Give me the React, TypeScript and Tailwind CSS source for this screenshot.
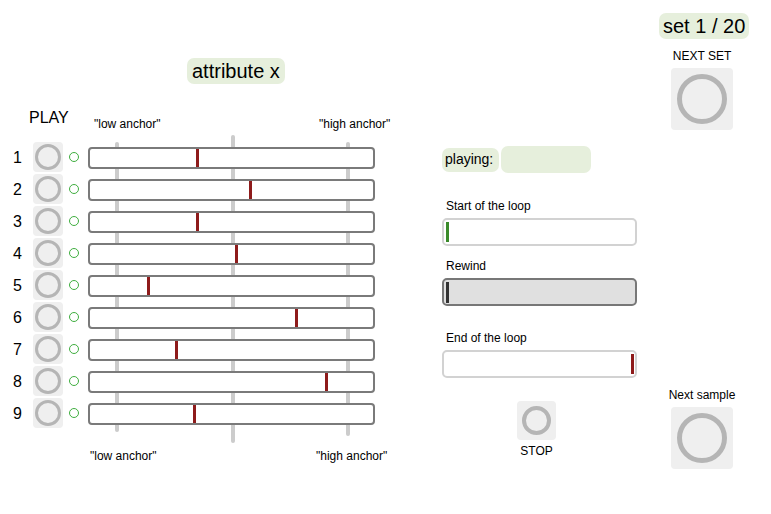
import React from "react";

// Marker x positions (page coords, centre of the red tick) for each row
const ROWS = [197, 250, 197, 236, 148, 296, 176, 326, 194];

function Pill({ children, className = "" }: { children?: React.ReactNode; className?: string }) {
  return (
    <div className={`flex items-center rounded-[7px] bg-[#e6efdc] ${className}`}>
      {children}
    </div>
  );
}

function RingButton({ size, ring, stroke }: { size: string; ring: string; stroke: string }) {
  return (
    <div className={`flex items-center justify-center rounded-[4px] bg-[#efefef] ${size}`}>
      <div className={`rounded-full border-[#b5b5b5] ${ring} ${stroke}`} />
    </div>
  );
}

function Row({ n, x }: { n: number; x: number }) {
  return (
    <div className="relative z-10 flex h-[32px] items-center">
      <span className="w-[33px] pl-[13px] pt-[1px] text-[16px] leading-[18px] text-black">{n}</span>
      <RingButton size="w-[30px] h-[30px]" ring="w-[26px] h-[26px]" stroke="border-[3px]" />
      <div className="ml-[6px] h-[10px] w-[10px] rounded-full border border-[#3fae3f]" />
      <div className="relative ml-[9px] mt-[2px] h-[22px] w-[287px] rounded-[4px] border-2 border-[#7a7a7a] bg-white">
        <div className="absolute top-0 h-full w-[3px] bg-[#8e1b1b]" style={{ left: x - 91 }} />
      </div>
    </div>
  );
}

export default function App() {
  return (
    <div className="flex h-[514px] w-[771px] overflow-hidden bg-white font-['Liberation_Sans',Arial,sans-serif] text-black">
      {/* ── Left: attribute sliders ─────────────────────────────── */}
      <div className="w-[442px] shrink-0">
        <Pill className="ml-[187px] mt-[58px] h-[26px] w-fit px-[5px] text-[20px]">attribute x</Pill>

        <div className="flex h-[57px]">
          <div className="w-[94px] pl-[29px] pt-[25px] text-[16px] leading-[18px]">PLAY</div>
          <div className="w-[225px] pt-[33px] text-[12px] leading-[14px]">"low anchor"</div>
          <div className="pt-[33px] text-[12px] leading-[14px]">"high anchor"</div>
        </div>

        <div className="relative">
          <div className="absolute left-[115px] top-[1px] h-[290px] w-[4px] rounded-full bg-[#cccccc]" />
          <div className="absolute left-[231px] top-[-6px] h-[308px] w-[4px] rounded-full bg-[#cccccc]" />
          <div className="absolute left-[346px] top-[1px] h-[294px] w-[4px] rounded-full bg-[#cccccc]" />
          {ROWS.map((x, i) => (
            <Row key={i} n={i + 1} x={x} />
          ))}
        </div>

        <div className="mt-[20px] flex text-[12px] leading-[14px]">
          <div className="w-[316px] pl-[90px]">"low anchor"</div>
          <div>"high anchor"</div>
        </div>
      </div>

      {/* ── Middle: playback controls ───────────────────────────── */}
      <div className="w-[195px] shrink-0">
        <div className="mt-[146px] flex items-center">
          <Pill className="h-[24px] w-[57px] px-[3px] text-[14px]">playing:</Pill>
          <Pill className="ml-[2px] h-[27px] w-[90px]" />
        </div>

        <div className="ml-[4px] mt-[26px] text-[12px] leading-[14px]">Start of the loop</div>
        <div className="mt-[5px] h-[28px] w-[195px] rounded-[5px] border-2 border-[#d2d2d2] bg-white pl-[2px] pt-[2px]">
          <div className="h-[20px] w-[3px] bg-[#3a8a2a]" />
        </div>

        <div className="ml-[4px] mt-[13px] text-[12px] leading-[14px]">Rewind</div>
        <div className="mt-[5px] h-[28px] w-[195px] rounded-[5px] border-2 border-[#777777] bg-[#e0e0e0] pl-[2px] pt-[2px]">
          <div className="h-[21px] w-[3px] bg-[#333333]" />
        </div>

        <div className="ml-[4px] mt-[25px] text-[12px] leading-[14px]">End of the loop</div>
        <div className="mt-[5px] flex h-[28px] w-[195px] justify-end rounded-[5px] border-2 border-[#d2d2d2] bg-white pr-[1px] pt-[2px]">
          <div className="h-[20px] w-[3px] bg-[#8e1b1b]" />
        </div>

        <div className="ml-[75px] mt-[23px] flex w-[39px] flex-col items-center">
          <RingButton size="w-[39px] h-[39px]" ring="w-[29px] h-[29px]" stroke="border-4" />
          <div className="mt-[4px] text-[12px] leading-[14px]">STOP</div>
        </div>
      </div>

      {/* ── Right: set navigation ───────────────────────────────── */}
      <div className="flex-1">
        <Pill className="ml-[22px] mt-[13px] h-[26px] w-fit px-[4px] text-[20px]">set 1 / 20</Pill>

        <div className="ml-[34px] mt-[10px] flex w-[62px] flex-col items-center">
          <div className="whitespace-nowrap text-[12px] leading-[14px]">NEXT SET</div>
          <div className="mt-[5px]">
            <RingButton size="w-[62px] h-[62px]" ring="w-[50px] h-[50px]" stroke="border-[5px]" />
          </div>
        </div>

        <div className="ml-[34px] mt-[258px] flex w-[62px] flex-col items-center">
          <div className="whitespace-nowrap text-[12px] leading-[14px]">Next sample</div>
          <div className="mt-[5px]">
            <RingButton size="w-[62px] h-[62px]" ring="w-[50px] h-[50px]" stroke="border-[5px]" />
          </div>
        </div>
      </div>
    </div>
  );
}
